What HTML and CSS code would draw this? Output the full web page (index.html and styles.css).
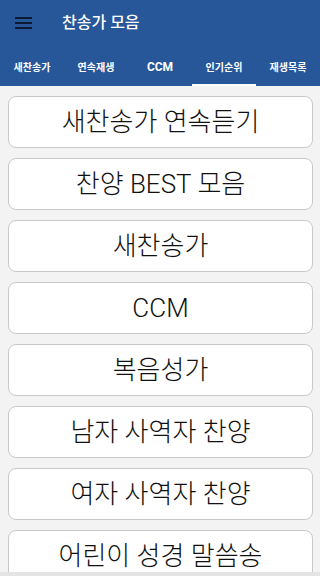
FILE: index.html
```html
<!DOCTYPE html>
<html lang="ko">
<head>
<meta charset="utf-8">
<title>찬송가 모음</title>
<link rel="stylesheet" href="styles.css">
</head>
<body>
<div class="app">
  <header class="appbar">
    <svg class="menu" width="17" height="12" viewBox="0 0 17 12">
      <rect x="0" y="0" width="17" height="2" fill="#0c1a33"/>
      <rect x="0" y="5" width="17" height="2" fill="#0c1a33"/>
      <rect x="0" y="10" width="17" height="2" fill="#0c1a33"/>
    </svg>
    <h1 class="title">찬송가 모음</h1>
  </header>
  <nav class="tabs">
    <div class="tab">새찬송가</div>
    <div class="tab">연속재생</div>
    <div class="tab tab-latin">CCM</div>
    <div class="tab active">인기순위</div>
    <div class="tab">재생목록</div>
  </nav>
  <main class="list">
    <button class="item">새찬송가 연속듣기</button>
    <button class="item">찬양 BEST 모음</button>
    <button class="item">새찬송가</button>
    <button class="item">CCM</button>
    <button class="item">복음성가</button>
    <button class="item">남자 사역자 찬양</button>
    <button class="item">여자 사역자 찬양</button>
    <button class="item">어린이 성경 말씀송</button>
  </main>
  <div class="bottom-edge"></div>
</div>
</body>
</html>
```
FILE: styles.css
```css
html, body {
  margin: 0;
  padding: 0;
  height: 100%;
  overflow: hidden;
}
body {
  background: #f3f3f3;
  font-family: Roboto, "Noto Sans CJK KR", sans-serif;
}
.app {
  display: flex;
  flex-direction: column;
  height: 100%;
}
.appbar {
  height: 46px;
  background: #275799;
  display: flex;
  align-items: center;
  padding-left: 15px;
  flex-shrink: 0;
}
.menu {
  display: block;
}
.title {
  margin: 0 0 0 30px;
  font-size: 16px;
  font-weight: 500;
  color: #ffffff;
  letter-spacing: 0;
  line-height: 1;
  padding-bottom: 1px;
}
.tabs {
  height: 40px;
  background: #275799;
  display: grid;
  grid-template-columns: repeat(5, 1fr);
  flex-shrink: 0;
}
.tab {
  display: flex;
  align-items: center;
  justify-content: center;
  color: #ffffff;
  font-size: 10px;
  font-weight: 700;
  position: relative;
  padding-top: 1px;
}
.tab-latin {
  font-size: 12px;
}
.tab.active::after {
  content: "";
  position: absolute;
  left: 0;
  right: 0;
  bottom: 0;
  height: 2px;
  background: #ffffff;
}
.list {
  display: flex;
  flex-direction: column;
  gap: 10px;
  padding: 10px 7px 0 8px;
}
.item {
  height: 52px;
  flex-shrink: 0;
  background: #ffffff;
  border: 1px solid #c9c9c9;
  border-radius: 8px;
  font-family: Roboto, "Noto Sans CJK KR", sans-serif;
  font-size: 26px;
  font-weight: 300;
  color: #111111;
  padding: 0 0 1px 0;
  margin: 0;
  text-align: center;
  line-height: 1;
}
.bottom-edge {
  position: fixed;
  left: 0;
  right: 0;
  bottom: 0;
  height: 4px;
  background: #e4e4e4;
}
```
